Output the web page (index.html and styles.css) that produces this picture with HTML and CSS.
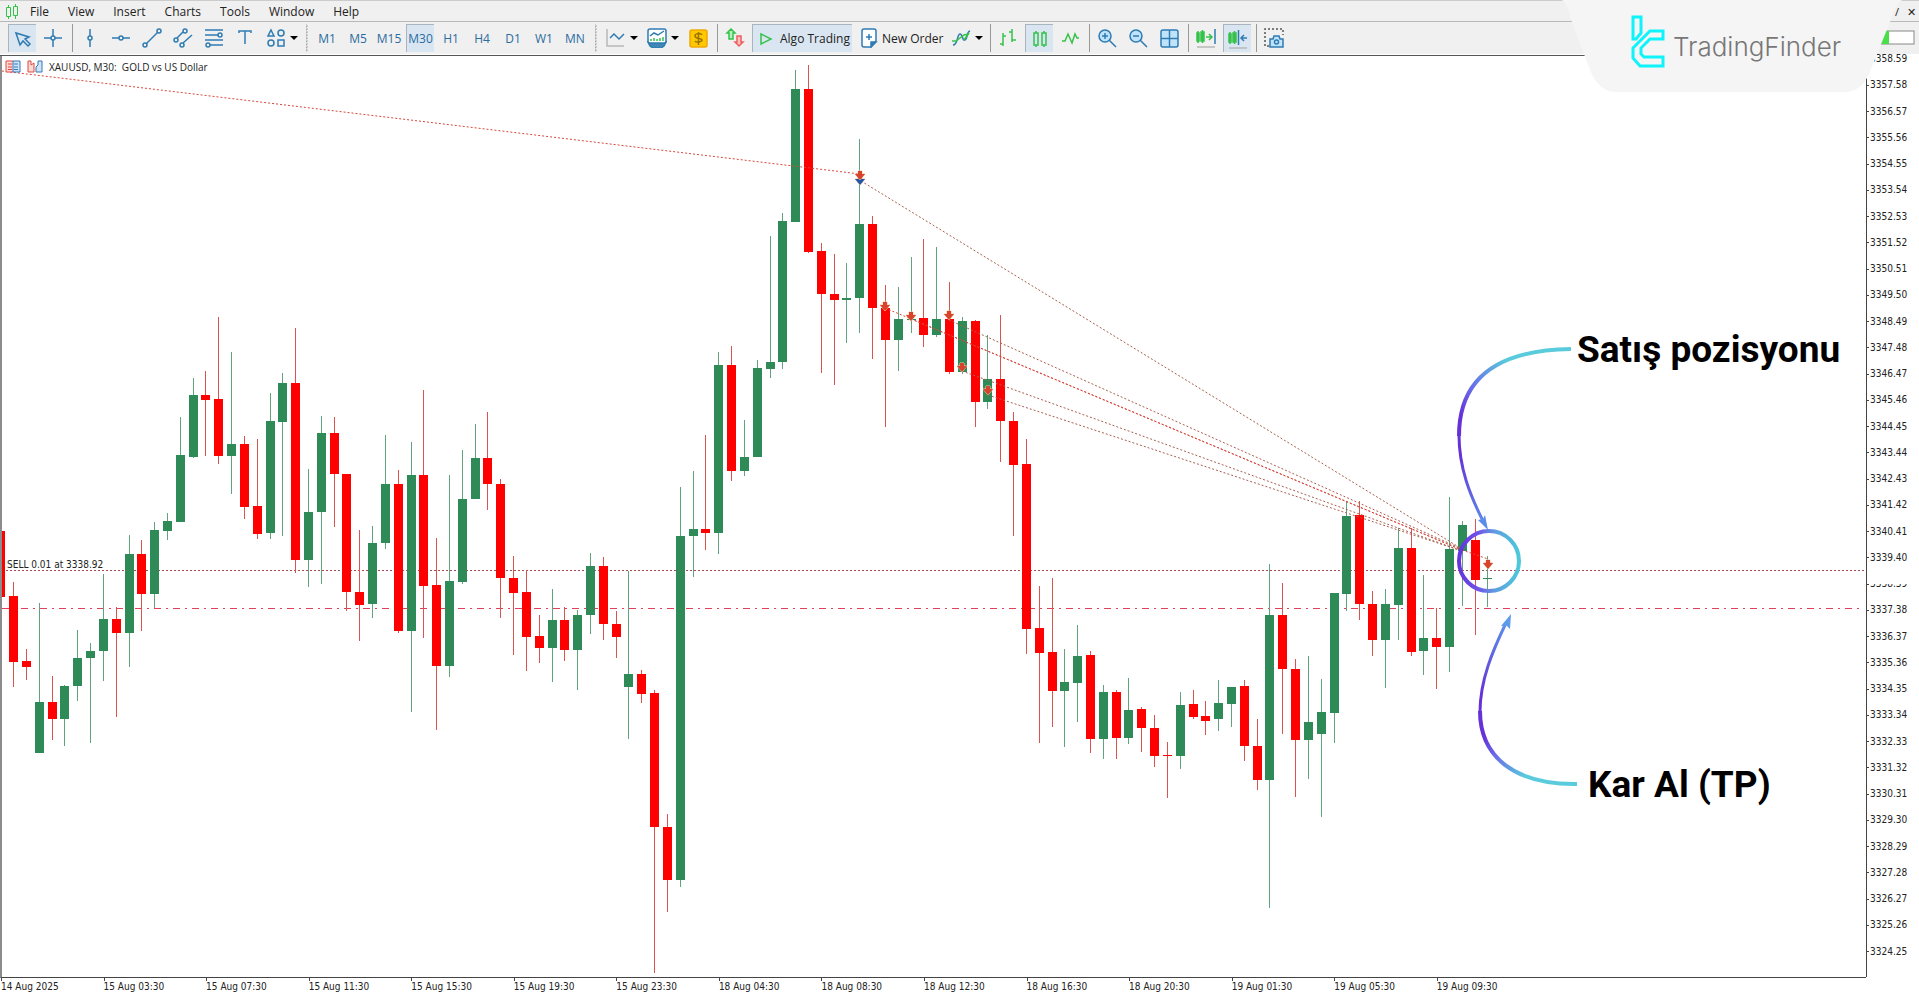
FILE: index.html
```html
<!DOCTYPE html>
<html lang="en">
<head>
    <meta charset="UTF-8">
    <meta name="viewport" content="width=device-width, initial-scale=1.0">
    <title>XAUUSD, M30</title>
    <link rel="stylesheet" href="styles.css">
</head>
<body>
    <nav class="menubar">
        <svg class="app-icon" width="14" height="16" viewBox="0 0 14 16"><path d="M3.500 1v2M3.500 13v2M1.500 3.500h4v9h-4zM10.500 0v2M10.500 12v3M8.500 2.500h4v9h-4z"/></svg>
        <button>File</button>
        <button>View</button>
        <button>Insert</button>
        <button>Charts</button>
        <button>Tools</button>
        <button>Window</button>
        <button>Help</button>
        <div class="window-buttons"><span>/</span><button aria-label="Close">✕</button></div>
    </nav>

    <div class="toolbar">
        <button class="tool active" aria-label="Cursor"><svg viewBox="0 0 20 20"><path d="M3 4l4 12 3-4 5 5 2-2-5-5 4-2z"/></svg></button>
        <button class="tool" aria-label="Crosshair"><svg viewBox="0 0 20 20"><path d="M10 1v7M10 12v7M1 10h7M12 10h7"/><circle cx="10" cy="10" r="2"/></svg></button>
        <span class="sep"></span>
        <button class="tool" aria-label="Vertical line"><svg viewBox="0 0 20 20"><path d="M10 1v7M10 12v7"/><circle cx="10" cy="10" r="2"/></svg></button>
        <button class="tool" aria-label="Horizontal line"><svg viewBox="0 0 20 20"><path d="M1 10h7M12 10h7"/><circle cx="10" cy="10" r="2"/></svg></button>
        <button class="tool" aria-label="Trendline"><svg viewBox="0 0 20 20"><path d="M4 16L16 4"/><circle cx="3" cy="17" r="2"/><circle cx="17" cy="3" r="2"/></svg></button>
        <button class="tool" aria-label="Channel"><svg viewBox="0 0 20 20"><path d="M4 10l6-6M10 15l9-8"/><circle cx="3" cy="12" r="2"/><circle cx="12" cy="3" r="2"/><circle cx="9" cy="17" r="2"/></svg></button>
        <button class="tool" aria-label="Fibonacci"><svg viewBox="0 0 20 20"><path d="M1 2h18M1 7h13M1 12h18M6 17h13"/><circle cx="16" cy="7" r="2"/><circle cx="4" cy="17" r="2"/></svg></button>
        <button class="tool" aria-label="Text"><svg viewBox="0 0 20 20"><path d="M4 5V3h12v2M10 3v13"/></svg></button>
        <button class="tool drop" aria-label="Shapes"><svg viewBox="0 0 20 20"><path d="M5 2l3 6H2zM12 12h6v6h-6z"/><circle cx="15" cy="5" r="3"/><circle cx="5" cy="15" r="3"/></svg></button>
        <span class="grip"></span>
        <button class="tool period">M1</button>
        <button class="tool period">M5</button>
        <button class="tool period">M15</button>
        <button class="tool period active">M30</button>
        <button class="tool period">H1</button>
        <button class="tool period">H4</button>
        <button class="tool period">D1</button>
        <button class="tool period">W1</button>
        <button class="tool period">MN</button>
        <span class="grip"></span>
        <button class="tool drop" aria-label="Chart type"><svg viewBox="0 0 20 20"><path class="gray" d="M1 1v17h17"/><path d="M4 10l4-4 5 5 5-5"/></svg></button>
        <button class="tool drop" aria-label="Templates"><svg viewBox="0 0 20 20"><path fill="#3f87b5" d="M1 14h18l-2 4-3 2H6l-3-2z"/><rect fill="#fff" x="1" y="1" width="18" height="14" rx="2"/><path d="M3 8l4-3 4 2 6-4"/><path class="green" d="M4 13v-2M7 13v-3M10 13v-2M13 13v-3M16 13V9"/></svg></button>
        <button class="tool" aria-label="Symbols"><svg viewBox="0 0 20 20"><rect x="2" y="2" width="17" height="17" rx="2" fill="#ffc800" stroke="#f0a800"/><path stroke="#9a7400" d="M14 7c-1-2-7-2-7 1s7 2 7 4-6 3-7 1M10.500 4v13"/></svg></button>
        <span class="sep"></span>
        <button class="tool" aria-label="Depth"><svg viewBox="0 0 20 20"><path class="green" fill="#b8efc0" d="M6 1l4 4H8v6H4V5H2z"/><path class="red" fill="#ffc0c0" d="M12 8h4v6h2l-4 4-4-4h2z"/></svg></button>
        <button class="tool wide algo active"><svg viewBox="0 0 20 20"><path class="green" d="M5 5l10 5-10 5z"/></svg>Algo Trading</button>
        <button class="tool wide order"><svg viewBox="0 0 20 20"><path fill="#fff" d="M6 1h10q2 0 2 2v10l-5 6H6q-2 0-2-2V3q0-2 2-2z"/><path fill="#2f7bb2" d="M13 19v-5h5z"/><path d="M8 9h6M11 6v6"/></svg>New Order</button>
        <button class="tool drop" aria-label="Indicators"><svg viewBox="0 0 20 20"><path d="M2 17c5 0 4-11 7-11s2 7 5 6 1-8 5-9"/><path class="green" d="M1 13h4l4-3 4-3 5-1M13 12l5-7"/></svg></button>
        <span class="sep"></span>
        <button class="tool" aria-label="Bars"><svg viewBox="0 0 20 20"><path class="green" d="M5 5v13M2 16h3M5 8h3M14 1v13M11 4h3M14 12h4"/></svg></button>
        <button class="tool active" aria-label="Candles"><svg viewBox="0 0 20 20"><path class="green" d="M4 4h4v12H4zM12 4h4v12h-4zM6 2v2M6 16v2M14 2v2M14 16v2"/></svg></button>
        <button class="tool" aria-label="Line"><svg viewBox="0 0 20 20"><path class="green" d="M2 13h3l3-7 4 9 3-9 2 4h2"/></svg></button>
        <span class="sep"></span>
        <button class="tool" aria-label="Zoom in"><svg viewBox="0 0 20 20"><circle cx="8" cy="8" r="6" fill="#bfe3fb"/><path d="M5 8h6M8 5v6M12 12l7 7"/></svg></button>
        <button class="tool" aria-label="Zoom out"><svg viewBox="0 0 20 20"><circle cx="8" cy="8" r="6" fill="#bfe3fb"/><path d="M5 8h6M12 12l7 7"/></svg></button>
        <button class="tool" aria-label="Tile windows"><svg viewBox="0 0 20 20"><rect x="2" y="2" width="17" height="17" rx="2" fill="#bfe3fb"/><path d="M10.500 2v17M2 10.500h17"/></svg></button>
        <span class="sep"></span>
        <button class="tool" aria-label="Shift end"><svg viewBox="0 0 20 20"><path class="green" fill="#35c24a" d="M1 5h2v8H1zM5 4h3v9H5zM2 3v12M6.500 2v13"/><path class="green" fill="none" d="M10 9h6M13 6l3 3-3 3"/><path d="M19 1v15"/><path class="gray" d="M1 19h18"/></svg></button>
        <button class="tool active" aria-label="Auto scroll"><svg viewBox="0 0 20 20"><path class="green" fill="#35c24a" d="M1 5h2v8H1zM5 4h3v9H5zM2 3v12M6.500 2v13"/><path d="M10.500 1v15M13 9h6M16 6l-3 3 3 3"/><path class="gray" d="M1 19h18"/></svg></button>
        <span class="sep"></span>
        <button class="tool" aria-label="Screenshot"><svg viewBox="0 0 20 20"><path stroke="#555" stroke-dasharray="2 2" d="M5 18H1V1h18v6"/><path fill="#bfe3fb" d="M6 11h3l1-3h5l1 3h3v8H6z"/><circle cx="12.500" cy="14" r="2"/></svg></button>
        <svg class="gauge" width="38" height="16" viewBox="0 0 38 16"><rect x="0" y="1" width="37" height="13" fill="#fff" stroke="#888"/><path d="M0 1h12v13H0z" fill="#4ade4a"/></svg>
    </div>

    <main class="chart">
        <div class="plot-column">
            <div class="plot">
                <svg class="plot-svg" viewBox="2 56 1864 921" preserveAspectRatio="xMinYMin meet">
                    <defs>
                        <linearGradient id="ring-fill" x1="0" x2="1" y1="0" y2="0">
                            <stop offset="0" stop-color="#6434dc"/>
                            <stop offset="0.300" stop-color="#7050e8"/>
                            <stop offset="0.600" stop-color="#5f9de0"/>
                            <stop offset="1" stop-color="#4cc9da"/>
                        </linearGradient>
                        <linearGradient id="sell-fill" gradientUnits="userSpaceOnUse" x1="1571" y1="349" x2="1440" y2="425">
                            <stop offset="0.400" stop-color="#5acbdc"/>
                            <stop offset="0.700" stop-color="#6a6ce8"/>
                            <stop offset="0.850" stop-color="#6632d8"/>
                        </linearGradient>
                        <linearGradient id="sell-tail" gradientUnits="userSpaceOnUse" x1="0" y1="437" x2="0" y2="530">
                            <stop offset="0.200" stop-color="#6632d8"/>
                            <stop offset="1" stop-color="#5c94ea"/>
                        </linearGradient>
                        <linearGradient id="tp-fill" gradientUnits="userSpaceOnUse" x1="1577" y1="784" x2="1470" y2="725">
                            <stop offset="0.400" stop-color="#5acbdc"/>
                            <stop offset="0.700" stop-color="#6a6ce8"/>
                            <stop offset="0.850" stop-color="#6632d8"/>
                        </linearGradient>
                        <linearGradient id="tp-tail" gradientUnits="userSpaceOnUse" x1="0" y1="712" x2="0" y2="615">
                            <stop offset="0.200" stop-color="#6632d8"/>
                            <stop offset="1" stop-color="#5c9cea"/>
                        </linearGradient>
                        <g id="mark">
                            <path d="M-2-4h4v3h3L0 5-5-1h3z"/>
                        </g>
                    </defs>
                    <path class="sell-line" d="M2 570.500H1864"/>
                    <path class="tp-line" d="M2 608.500H1864"/>
                    <g id="candles"></g>
                    <g class="deals">
                        <path class="bright" d="M2 71L860 174"/>
                        <path class="dim" d="M861 181L1462 549"/>
                        <path class="bright" d="M885 308L1462 550"/>
                        <path class="bright" d="M911 319L1462 550"/>
                        <path class="dim" d="M949 320L1462 549"/>
                        <path class="dim" d="M962 371L1462 551"/>
                        <path class="dim" d="M988 395L1462 551"/>
                        <path class="bright" d="M1462 550L1488 559"/>
                    </g>
                    <g class="marks">
                        <use href="#mark" class="buy" x="860" y="180"/>
                        <use href="#mark" x="860" y="175"/>
                        <use href="#mark" x="885" y="306"/>
                        <use href="#mark" x="911" y="316"/>
                        <use href="#mark" x="949" y="315"/>
                        <use href="#mark" x="962" y="367"/>
                        <use href="#mark" x="988" y="390"/>
                        <use href="#mark" x="1488" y="564"/>
                    </g>
                    <text class="sell-label" x="7" y="568">SELL 0.01 at 3338.92</text>
                    <g class="notes">
                        <circle cx="1489" cy="561" r="30" stroke="url(#ring-fill)"/>
                        <path stroke="url(#sell-fill)" d="M1571 349C1500 350 1459 376 1459 436"/>
                        <path class="tail" stroke="url(#sell-tail)" d="M1459 435C1459 468 1470 495 1483 521"/>
                        <path class="head" fill="#5c8cea" d="M1488 530l-10-10 5-1 2-4z"/>
                        <path stroke="url(#tp-fill)" d="M1577 784C1515 785 1480 757 1480 711"/>
                        <path class="tail" stroke="url(#tp-tail)" d="M1480 712C1480 680 1493 650 1506 623"/>
                        <path class="head" fill="#5c9cea" d="M1511 614l-1 15-3-3-6 0z"/>
                        <text x="1577" y="362">Satış pozisyonu</text>
                        <text x="1588" y="797">Kar Al (TP)</text>
                    </g>
                </svg>
                <div class="plot-title">
                    <svg width="16" height="14" viewBox="0 0 16 14"><path fill="#ffd9d4" stroke="#dd4a42" d="M8 1H1v11h7"/><path fill="#cfe6fa" stroke="#3477b8" d="M8 1h7v11H8z"/><path stroke="#dd4a42" d="M3 4h4M3 7h4M3 9.500h4"/><path stroke="#3477b8" d="M9 4h4M9 7h4M9 9.500h4"/></svg>
                    <svg width="16" height="14" viewBox="0 0 16 14"><path fill="#ffd9d4" stroke="#dd4a42" d="M1 1h3v4l3-2v9H1z"/><path fill="#cfe6fa" stroke="#3477b8" d="M9 7l2-2V1h4v11H9z"/></svg>
                    <span>XAUUSD, M30:&nbsp; GOLD vs US Dollar</span>
                </div>
            </div>
            <div class="time-axis" id="time-axis"></div>
        </div>
        <div class="price-axis" id="price-axis"></div>
    </main>

    <div class="brand">
        <svg class="brand-shape" viewBox="0 0 340 92"><path fill="#f5f5f5" d="M0 0c6 4 7 14 10 22l18 48q9 22 26 22h228q17 0 25-18l21-52c3-8 6-18 12-22z"/></svg>
        <svg class="brand-logo" width="34" height="53" viewBox="0 0 34 53"><path d="M10 18V2H2v22h3zM2 33L19 16h13v8H19l-9 9v6l3 3h19v9H9l-7-8z"/></svg>
        <span>TradingFinder</span>
    </div>

    <script src="chart.js"></script>
</body>
</html>
```
FILE: styles.css
```css
* {
    box-sizing: border-box;
}

body {
    margin: 0;
    height: 100vh;
    display: flex;
    flex-direction: column;
    position: relative;
    overflow: hidden;
    background: #fff;
    color: #222;
    font-family: "Open Sans", "Noto Sans", sans-serif;
    font-size: 12px;
}

button {
    padding: 0;
    border: none;
    background: none;
    color: inherit;
    font: inherit;
}

.menubar {
    height: 22px;
    display: flex;
    align-items: center;
    gap: 19px;
    padding: 1px 3px 0 5px;
    background: #f0f0f0;
    border-top: 1px solid #ccc;
    border-bottom: 1px solid #b8b8b8;
}

.app-icon {
    margin-right: -8px;
    fill: none;
    stroke: #35c24a;
}

.window-buttons {
    display: flex;
    gap: 8px;
    margin-left: auto;
    font-size: 11px;
}

/* toolbar */
.toolbar {
    height: 32px;
    display: flex;
    align-items: center;
    gap: 3px;
    padding: 0 4px 0 8px;
    background: #f0f0f0;
}

.tool {
    width: 28px;
    height: 28px;
    flex: none;
    display: flex;
    align-items: center;
    justify-content: center;
    white-space: nowrap;
}

.tool svg {
    width: 20px;
    height: 20px;
    flex: none;
    fill: none;
    stroke: #2f7bb2;
    stroke-width: 1.500;
}

.tool .green {
    stroke: #35c24a;
}

.tool .red {
    stroke: #ee5c5c;
}

.tool .gray {
    stroke: #b8b8b8;
}

.active {
    background: #d9e6f2;
    border-top: 1px solid #a9b4be;
    border-left: 1px solid #a9b4be;
}

.period {
    color: #2b6c9f;
}

.drop {
    width: 38px;
    gap: 4px;
    padding-left: 4px;
    justify-content: flex-start;
}

.drop::after {
    content: "";
    border: 4px solid transparent;
    border-top: 4px solid #000;
    border-bottom: 0;
}

.wide {
    gap: 4px;
    padding-left: 3px;
    justify-content: flex-start;
}

.algo {
    width: 100px;
}

.order {
    width: 89px;
}

.sep {
    width: 3px;
    height: 28px;
    border-right: 1px solid #999;
}

.grip {
    width: 7px;
    height: 28px;
    background: radial-gradient(circle, #aaa 1px, transparent 1px) center / 7px 3px repeat-y;
}

.gauge {
    margin-left: auto;
}

/* chart */
.chart {
    flex: 1;
    min-height: 0;
    display: flex;
    font-family: "DejaVu Sans Condensed", "DejaVu Sans", sans-serif;
    font-size: 10px;
}

.plot-column {
    flex: 1;
    display: flex;
    flex-direction: column;
    margin-top: 1px;
    border-top: 1px solid #555;
}

.plot {
    flex: 1;
    min-height: 0;
    position: relative;
    border-left: 2px solid #8c8c8c;
    border-bottom: 1px solid #444;
}

.plot-svg {
    display: block;
    width: 100%;
    height: 100%;
}

.plot-title {
    position: absolute;
    left: 3px;
    top: 4px;
    display: flex;
    align-items: center;
    gap: 6px;
    font-family: "Open Sans", sans-serif;
}

.plot-title svg {
    fill: none;
}

.up {
    fill: #2e8b57;
}

.down {
    fill: #ff0000;
}

.up-wick {
    fill: #5fa47f;
}

.down-wick {
    fill: #d9534f;
}

.sell-line {
    stroke: #a8484f;
    stroke-dasharray: 2 2;
}

.tp-line {
    stroke: #e0405a;
    stroke-dasharray: 7 5 2 5;
}

.deals {
    fill: none;
    stroke-dasharray: 2 2;
}

.bright {
    stroke: #d8473c;
}

.dim {
    stroke: #a8604f;
}

.marks {
    fill: #d8432b;
    stroke: #f3c9a8;
    stroke-width: 1;
    paint-order: stroke;
}

.buy {
    fill: #2456a8;
}

.sell-label {
    fill: #222;
    font-size: 10px;
}

.notes {
    fill: none;
    stroke-width: 4;
}

.notes .tail {
    stroke-width: 3;
}

.notes .head {
    stroke: none;
}

.notes text {
    fill: #000;
    font-family: Roboto, sans-serif;
    font-size: 37px;
    font-weight: 700;
}

.time-axis {
    height: 18px;
    display: grid;
    grid-template-columns: repeat(18, 1fr);
    padding: 0 19px 0 1px;
}

.time-axis span {
    white-space: nowrap;
    line-height: 12px;
}

.time-axis span::before {
    content: "";
    display: block;
    width: 1px;
    height: 3px;
    background: #444;
}

.price-axis {
    width: 53px;
    display: flex;
    flex-direction: column;
    justify-content: space-between;
    padding: 1px 0 40px;
    background: linear-gradient(#444, #444) 0 0 / 1px 923px no-repeat;
}

.price-axis span {
    display: flex;
    align-items: center;
    line-height: 8px;
}

.price-axis span::before {
    content: "";
    width: 3px;
    height: 1px;
    margin-right: 1px;
    background: #444;
}

.price-axis .covered {
    clip-path: inset(4px 0 -2px 0);
}

/* brand badge over the top right corner */
.brand {
    position: absolute;
    top: 0;
    right: 17px;
    width: 340px;
    height: 92px;
    display: flex;
    align-items: center;
    gap: 8px;
    padding-left: 69px;
    color: #777;
    font-family: Inter, sans-serif;
    font-size: 26px;
    font-weight: 300;
}

.brand-shape {
    position: absolute;
    inset: 0;
}

.brand-logo {
    position: relative;
    margin-bottom: 10px;
    fill: none;
    stroke: #0ff4fb;
    stroke-width: 3;
}

.brand span {
    position: relative;
}
```
FILE: chart.js
```javascript
// candles: [direction, high, body top, body bottom, low]
const candles = [
    ['r', 531, 531, 597, 597], ['r', 582, 596, 662, 687], ['r', 649, 661, 667, 680], ['g', 603, 702, 753, 753],
    ['r', 676, 702, 719, 740], ['g', 685, 686, 719, 746], ['g', 630, 658, 686, 701], ['g', 643, 651, 658, 743],
    ['g', 574, 619, 651, 681], ['r', 607, 619, 633, 717], ['g', 535, 554, 633, 667], ['r', 540, 554, 594, 631],
    ['g', 522, 530, 594, 608], ['g', 513, 521, 531, 540], ['g', 417, 455, 522, 522], ['g', 378, 395, 457, 458],
    ['r', 371, 395, 400, 456], ['r', 317, 399, 456, 464], ['g', 352, 444, 456, 494], ['r', 436, 444, 507, 519],
    ['r', 439, 506, 534, 539], ['g', 393, 421, 533, 539], ['g', 373, 383, 422, 536], ['r', 328, 383, 560, 573],
    ['g', 469, 512, 560, 587], ['g', 416, 433, 512, 584], ['r', 417, 433, 474, 527], ['r', 474, 474, 592, 611],
    ['r', 530, 592, 605, 641], ['g', 526, 543, 604, 618], ['g', 435, 484, 543, 549], ['r', 470, 484, 631, 633],
    ['g', 442, 475, 631, 712], ['r', 390, 475, 586, 638], ['r', 538, 585, 666, 730], ['g', 475, 581, 666, 677],
    ['g', 450, 499, 582, 584], ['g', 424, 458, 499, 499], ['r', 412, 458, 484, 510], ['r', 479, 484, 578, 618],
    ['r', 556, 578, 593, 655], ['r', 570, 592, 637, 671], ['r', 615, 636, 648, 663], ['g', 589, 620, 648, 682],
    ['r', 607, 620, 650, 661], ['g', 610, 615, 650, 690], ['g', 553, 566, 615, 634], ['r', 557, 566, 624, 640],
    ['r', 611, 624, 637, 658], ['g', 571, 674, 687, 739], ['r', 670, 674, 694, 703], ['r', 690, 693, 827, 973],
    ['r', 814, 827, 880, 912], ['g', 487, 536, 880, 887], ['g', 471, 529, 536, 577], ['r', 435, 529, 533, 550],
    ['g', 352, 365, 533, 554], ['r', 346, 365, 471, 481], ['g', 420, 457, 471, 476], ['g', 360, 368, 457, 457],
    ['g', 236, 362, 369, 378], ['g', 213, 221, 362, 369], ['g', 70, 89, 222, 222], ['r', 65, 89, 252, 253],
    ['r', 243, 251, 294, 373], ['r', 254, 294, 300, 385], ['g', 263, 298, 300, 343], ['g', 139, 224, 298, 333],
    ['r', 216, 224, 308, 359], ['r', 285, 308, 340, 427], ['g', 287, 319, 340, 371], ['g', 257, 319, 320, 333],
    ['r', 239, 318, 335, 347], ['g', 247, 319, 335, 337], ['r', 282, 319, 372, 374], ['g', 317, 321, 372, 374],
    ['r', 320, 321, 402, 427], ['g', 335, 379, 402, 409], ['r', 315, 379, 421, 462], ['r', 412, 421, 465, 536],
    ['r', 439, 464, 629, 654], ['r', 586, 628, 653, 743], ['r', 578, 652, 691, 727], ['g', 649, 682, 691, 747],
    ['g', 625, 656, 683, 722], ['r', 651, 655, 739, 753], ['g', 685, 692, 739, 759], ['r', 690, 692, 738, 759],
    ['g', 678, 710, 738, 744], ['r', 707, 709, 728, 752], ['r', 715, 728, 756, 767], ['r', 742, 755, 756, 798],
    ['g', 692, 705, 756, 769], ['r', 690, 704, 717, 719], ['r', 701, 716, 721, 735], ['g', 680, 703, 719, 731],
    ['g', 687, 687, 704, 727], ['r', 680, 686, 746, 761], ['r', 719, 746, 780, 790], ['g', 564, 615, 780, 908],
    ['r', 583, 615, 669, 734], ['r', 659, 669, 740, 797], ['g', 656, 722, 740, 779], ['g', 679, 712, 734, 817],
    ['g', 593, 593, 713, 743], ['g', 501, 516, 594, 611], ['r', 501, 515, 604, 620], ['r', 591, 604, 640, 656],
    ['g', 589, 604, 640, 688], ['g', 528, 548, 605, 640], ['r', 528, 548, 652, 656], ['g', 575, 638, 651, 675],
    ['r', 608, 638, 647, 689], ['g', 497, 549, 647, 672], ['g', 521, 525, 551, 606], ['r', 519, 540, 580, 635],
    ['g', 556, 578, 579, 607]
];

const STEP = 12.82;
const BODY = 9;

function rect(className, x, y, width, height) {
    const el = document.createElementNS('http://www.w3.org/2000/svg', 'rect');
    el.setAttribute('class', className);
    el.setAttribute('x', x);
    el.setAttribute('y', y);
    el.setAttribute('width', width);
    el.setAttribute('height', height);
    return el;
}

const layer = document.getElementById('candles');
candles.forEach(([dir, high, top, bottom, low], i) => {
    const x = Math.round(0.3 + i * STEP);
    const name = dir === 'g' ? 'up' : 'down';
    layer.appendChild(rect(name + '-wick', x, high, 1, low - high));
    layer.appendChild(rect(name, x - 4, top, BODY, bottom - top));
});

// price labels, 1.01 apart
const priceAxis = document.getElementById('price-axis');
for (let i = 0; i < 35; i++) {
    const label = document.createElement('span');
    label.textContent = (3358.59 - i * 1.01).toFixed(2);
    if (i === 20) label.className = 'covered';
    priceAxis.appendChild(label);
}

const times = [
    '14 Aug 2025', '15 Aug 03:30', '15 Aug 07:30', '15 Aug 11:30', '15 Aug 15:30',
    '15 Aug 19:30', '15 Aug 23:30', '18 Aug 04:30', '18 Aug 08:30', '18 Aug 12:30',
    '18 Aug 16:30', '18 Aug 20:30', '19 Aug 01:30', '19 Aug 05:30', '19 Aug 09:30'
];
const timeAxis = document.getElementById('time-axis');
times.forEach(time => {
    const label = document.createElement('span');
    label.textContent = time;
    timeAxis.appendChild(label);
});
```
